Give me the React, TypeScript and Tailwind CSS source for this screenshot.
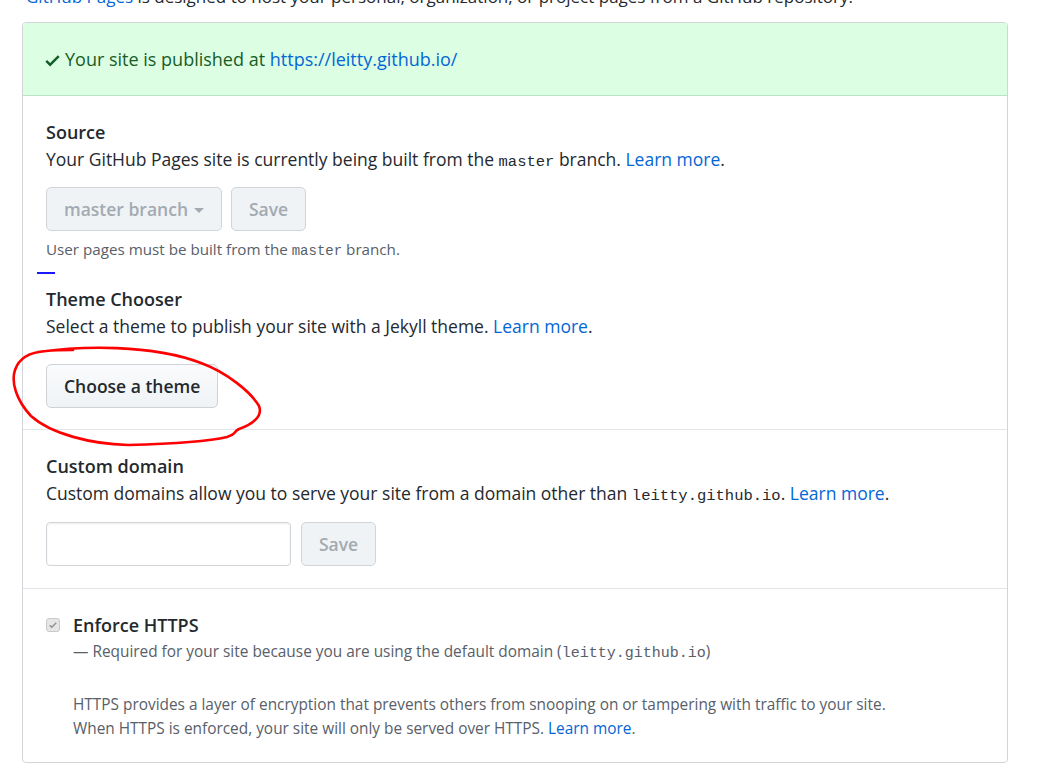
import React from 'react'

const sans = "font-['Open_Sans','Noto_Sans',sans-serif]"
const mono = "font-['Liberation_Mono','DejaVu_Sans_Mono',monospace]"

const Code = ({ children }: { children: React.ReactNode }) => (
  <code className={`${mono} text-[15.5px]`}>{children}</code>
)

const LearnMore = () => (
  <a href="#" className="text-[#0366d6]">
    Learn more
  </a>
)

const DisabledButton = ({ children, className = '' }: { children: React.ReactNode; className?: string }) => (
  <button
    disabled
    className={`h-[44px] rounded-[5px] border border-[#d1d5da] bg-[#eff3f6] px-[17px] text-[17.5px] font-semibold text-[#a3aab1] ${className}`}>
    {children}
  </button>
)

const App = () => {
  return (
    <div className={`relative h-[777px] w-[1048px] overflow-hidden bg-white text-[#24292e] ${sans}`}>
      {/* Intro line, cut off by the top of the screenshot */}
      <p className="-mt-[16px] pl-[26px] text-[17px] leading-[26px] text-[#24292e]">
        <a href="#" className="text-[#0366d6]">
          GitHub Pages
        </a>{' '}
        is designed to host your personal, organization, or project pages from a GitHub repository.
      </p>

      <div className="ml-[22px] mt-[12px] w-[986px] rounded-[4px] border border-[#d1d5da]">
        {/* Published banner */}
        <div className="flex h-[73px] items-center gap-[5px] rounded-t-[3px] border-b border-[#b9e3c4] bg-[#dcffe4] px-[22px] text-[18px] text-[#165c26]">
          <svg width="15" height="19" viewBox="0 0 12 16" className="mt-[2px] fill-current">
            <path fillRule="evenodd" d="M12 5l-8 8-4-4 1.5-1.5L4 10l6.5-6.5L12 5z" />
          </svg>
          <span>
            Your site is published at{' '}
            <a href="#" className="text-[#0366d6]">
              https://leitty.github.io/
            </a>
          </span>
        </div>

        {/* Source + theme chooser */}
        <div className="border-b border-[#e1e4e8] px-[23px] pb-[21px] pt-[22px]">
          <h3 className="text-[18px] font-semibold leading-[28px]">Source</h3>
          <p className="text-[17.5px] leading-[26px]">
            Your GitHub Pages site is currently being built from the <Code>master</Code> branch. <LearnMore />.
          </p>
          <div className="mt-[12px] flex gap-[9px]">
            <DisabledButton className="flex items-center gap-[6px]">
              master branch
              <span className="mt-[2px] h-0 w-0 border-x-[5px] border-t-[5px] border-x-transparent border-t-[#a3aab1]" />
            </DisabledButton>
            <DisabledButton>Save</DisabledButton>
          </div>
          <p className="mt-[8px] text-[15.2px] leading-[20px] text-[#586069]">
            User pages must be built from the <code className={`${mono} text-[14px]`}>master</code> branch.
          </p>

          <div className="-ml-[9px] mt-[11px] h-[2px] w-[18px] bg-[#1a1aff]" />

          <h3 className="mt-[11px] text-[18px] font-semibold leading-[28px]">Theme Chooser</h3>
          <p className="text-[17.5px] leading-[26px]">
            Select a theme to publish your site with a Jekyll theme. <LearnMore />.
          </p>
          <div className="relative mt-[25px] w-fit">
            <button className="h-[44px] rounded-[5px] border border-[#cfd3d7] bg-gradient-to-b from-[#fafbfc] to-[#eff3f6] px-[17px] text-[17.5px] font-semibold text-[#24292e]">
              Choose a theme
            </button>
            {/* Hand-drawn red annotation */}
            <svg
              className="pointer-events-none absolute -left-[45px] -top-[30px]"
              width="275"
              height="120"
              viewBox="0 0 275 120"
              fill="none">
              <path
                d="M37 18 C 80 12, 150 10, 200 29 C 225 38, 250 58, 258 72 C 262 82, 252 90, 238 95 C 232 98, 236 100, 226 103 C 205 108, 165 110, 127 111 C 90 110, 50 100, 30 82 C 15 66, 10 48, 14 36 C 18 24, 30 18, 45 17 C 55 16, 62 16, 72 16"
                stroke="#ff0000"
                strokeWidth="2.6"
                strokeLinecap="round"
                strokeLinejoin="round"
              />
            </svg>
          </div>
        </div>

        {/* Custom domain */}
        <div className="border-b border-[#e1e4e8] px-[23px] pb-[22px] pt-[22px]">
          <h3 className="text-[18px] font-semibold leading-[28px]">Custom domain</h3>
          <p className="text-[17.5px] leading-[26px]">
            Custom domains allow you to serve your site from a domain other than <Code>leitty.github.io</Code>.{' '}
            <LearnMore />.
          </p>
          <div className="mt-[13px] flex gap-[10px]">
            <input
              type="text"
              className="h-[44px] w-[245px] rounded-[4px] border border-[#d1d5da] px-[10px] text-[17px] shadow-[inset_0_1px_2px_rgba(27,31,35,0.075)] outline-none"
            />
            <DisabledButton>Save</DisabledButton>
          </div>
        </div>

        {/* Enforce HTTPS */}
        <div className="px-[23px] pb-[21px] pt-[22px]">
          <div className="flex items-center gap-[13px]">
            <span className="flex h-[14px] w-[14px] items-center justify-center rounded-[3px] border border-[#c9c9c9] bg-[#e6e6e6]">
              <svg width="10" height="10" viewBox="0 0 12 16" className="fill-[#8f8f8f]">
                <path fillRule="evenodd" d="M12 5l-8 8-4-4 1.5-1.5L4 10l6.5-6.5L12 5z" />
              </svg>
            </span>
            <span className="text-[18px] font-semibold leading-[28px]">Enforce HTTPS</span>
          </div>
          <div className="mt-[1px] pl-[27px] text-[15.4px] leading-[24px] text-[#586069]">
            <p>
              — Required for your site because you are using the default domain (
              <code className={`${mono} text-[15px]`}>leitty.github.io</code>)
            </p>
            <p className="mt-[27px]">
              HTTPS provides a layer of encryption that prevents others from snooping on or tampering with traffic to
              your site.
              <br />
              When HTTPS is enforced, your site will only be served over HTTPS. <LearnMore />.
            </p>
          </div>
        </div>
      </div>
    </div>
  )
}

export default App
